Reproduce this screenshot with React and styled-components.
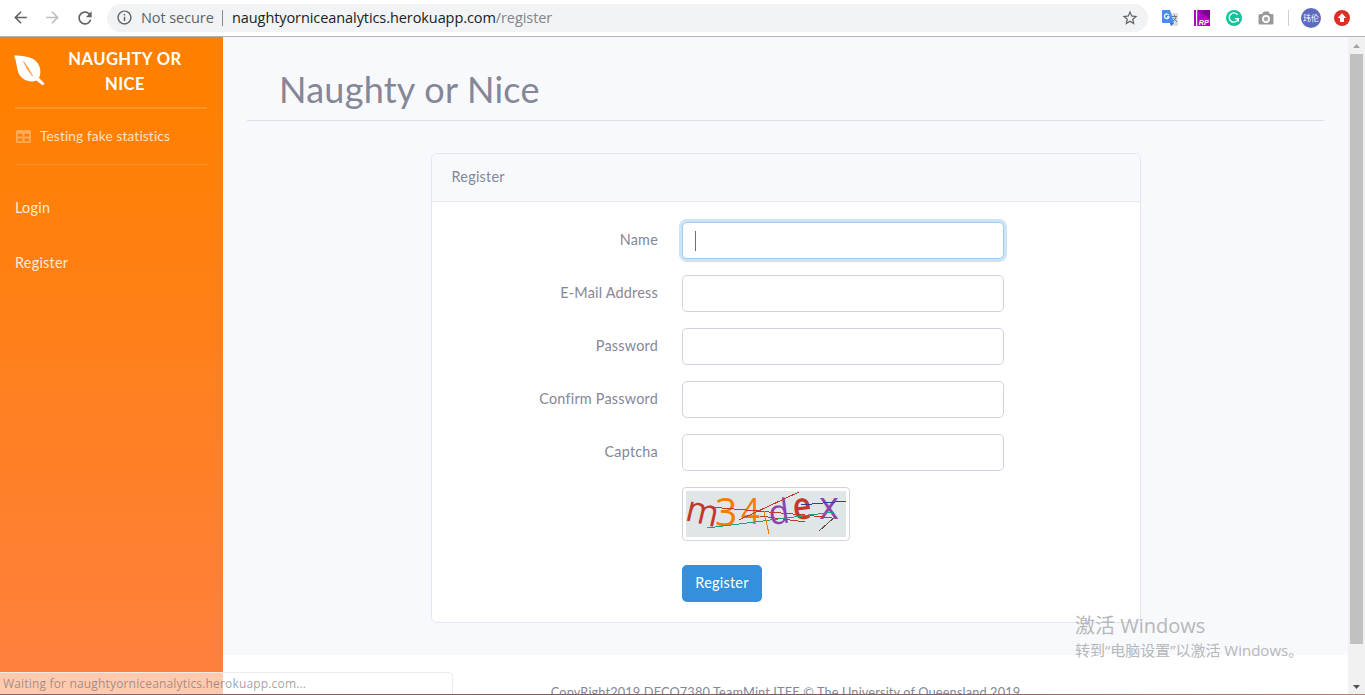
import React from 'react';
import styled, { createGlobalStyle } from 'styled-components';
import { FaTable } from 'react-icons/fa';
import { MdArrowBack, MdArrowForward, MdRefresh, MdStarBorder, MdInfoOutline } from 'react-icons/md';

const uiFont = `"Open Sans", "Noto Sans CJK SC", sans-serif`;
const pageFont = `Lato, "Noto Sans", sans-serif`;

const Global = createGlobalStyle`
  * { box-sizing: border-box; }
  html, body { margin: 0; height: 695px; overflow: hidden; background: #fff; }
  body { font-family: ${pageFont}; color: #858796; font-size: 14.4px; line-height: 23px; }
`;

const Browser = styled.div`
  position: relative;
  display: flex;
  flex-direction: column;
  width: 1365px;
  height: 695px;
  overflow: hidden;
`;

const Toolbar = styled.header`
  display: flex;
  align-items: center;
  flex: none;
  height: 37px;
  padding: 0 6px 1px 11px;
  background: #fff;
  border-bottom: 1px solid #b3b3b6;
  svg { flex: none; display: block; }
`;

const NavButtons = styled.div`
  display: flex;
  gap: 13px;
  width: 96px;
  color: #5f6368;
`;

const Faded = styled.span`
  color: #bbbdbf;
`;

const Omnibox = styled.div`
  display: flex;
  align-items: center;
  width: 1041px;
  height: 28px;
  padding: 0 9px 0 9px;
  border-radius: 14px;
  background: #f1f3f4;
  color: #5f6368;
  font: 14.5px/20px ${uiFont};
  white-space: nowrap;
`;

const Secure = styled.span`
  width: 73px;
  margin-left: 8px;
  letter-spacing: -0.08px;
`;

const Bar = styled.i`
  width: 1px;
  height: 16px;
  margin: 0 9px 0 8px;
  background: #85888c;
`;

const Address = styled.span`
  flex: 1;
  letter-spacing: -0.08px;
  color: #202124;
  span { color: #80868b; }
`;

const Extensions = styled.div`
  display: flex;
  align-items: center;
  flex: 1;
  padding-left: 14px;
  gap: 16px;
`;

const Divider = styled.i`
  width: 1px;
  height: 16px;
  margin: 0 -4px 0 -2px;
  background: #ccced1;
`;

const Avatar = styled.span`
  width: 20px;
  height: 20px;
  margin-right: -3px;
  border-radius: 50%;
  background: #5c6bc0;
  color: #fff;
  font: 8px/20px "Noto Sans CJK SC", sans-serif;
  text-align: center;
  white-space: nowrap;
`;

const Viewport = styled.div`
  display: flex;
  flex: 1;
  min-height: 0;
`;

const Sidebar = styled.nav`
  width: 223px;
  flex: none;
  padding: 9px 16px 0 15px;
  background: linear-gradient(#ff8000 0%, #ff8000 10%, #ff8040 100%);
  color: #ffe0c4;
`;

const Brand = styled.div`
  display: flex;
  height: 61px;
  color: #fff;
  svg { flex: none; margin: 9px 0 0 -1px; }
`;

const BrandName = styled.div`
  flex: 1;
  padding-top: 1px;
  margin-right: 3px;
  font: 700 16.6px/25px ${pageFont};
  letter-spacing: 0.4px;
  text-align: center;
`;

const Rule = styled.hr`
  height: ${(p) => p.$h || 1}px;
  margin: 0;
  border: 0;
  background: rgba(255, 255, 255, 0.16);
`;

const StatLink = styled.a`
  display: flex;
  align-items: center;
  height: 55px;
  padding: 0 0 1px 1px;
  gap: 9px;
  font-size: 13.6px;
  letter-spacing: 0.16px;
  svg { color: #ffaa59; }
`;

const NavLink = styled.a`
  display: block;
  height: 55px;
  letter-spacing: 0.25px;
  color: #ffe9d8;
`;

const NavList = styled.div`
  padding-top: 31px;
`;

const Main = styled.main`
  display: flex;
  flex-direction: column;
  flex: 1;
  min-width: 0;
`;

const Content = styled.section`
  flex: none;
  height: 618px;
  padding: 0 24px;
  background: #f8f9fc;
`;

const Title = styled.h1`
  height: 84px;
  margin: 0 0 32px;
  padding: 28px 0 0 32px;
  border-bottom: 1px solid #dddfe4;
  font: 400 36px/48px ${pageFont};
  letter-spacing: 0.25px;
`;

const Card = styled.div`
  width: 710px;
  height: 470px;
  margin-left: 184px;
  border: 1px solid #e3e6f0;
  border-radius: 6px;
  background: #fff;
`;

const CardHeader = styled.div`
  height: 48px;
  padding: 11px 19.5px;
  border-bottom: 1px solid #e3e6f0;
  border-radius: 5px 5px 0 0;
  background: #f8f9fc;
  letter-spacing: 0.25px;
`;

const Form = styled.form`
  display: flex;
  flex-direction: column;
  gap: 16px;
  padding-top: 20px;
`;

const Row = styled.label`
  display: flex;
  height: 37px;
`;

const Label = styled.span`
  width: 226px;
  margin-right: 24px;
  padding-top: 6px;
  letter-spacing: 0.22px;
  text-align: right;
`;

const Field = styled.span`
  display: flex;
  align-items: center;
  width: 322px;
  padding-left: 12px;
  border: 1px solid ${(p) => (p.$focused ? '#a1cbef' : '#d1d3e2')};
  border-radius: 5px;
  background: #fff;
  box-shadow: ${(p) => (p.$focused ? '0 0 0 3px #cde3f6' : 'none')};
`;

const Caret = styled.i`
  width: 1px;
  height: 20px;
  background: #6e707e;
`;

const Captcha = styled.div`
  width: 168px;
  height: 54px;
  margin-left: 250px;
  padding: 3px;
  border: 1px solid #d0d4dc;
  border-radius: 4px;
  svg { display: block; overflow: visible; background: #e0e6e8; }
`;

const Submit = styled.button`
  width: 80px;
  height: 37px;
  margin: 8px 0 0 250px;
  padding: 0 0 2px;
  border: 0;
  border-radius: 5px;
  background: #3490dc;
  color: #fff;
  font: 14.4px/23px ${pageFont};
  letter-spacing: 0.25px;
`;

const Footer = styled.footer`
  flex: 1;
  padding-top: 27px;
  background: #fff;
  font-size: 12.8px;
  letter-spacing: 0.12px;
  line-height: 20px;
  text-align: center;
  white-space: nowrap;
`;

const Scrollbar = styled.div`
  display: flex;
  flex-direction: column;
  align-items: center;
  width: 17px;
  padding: 6px 0 5px;
  background: #f1f1f1;
`;

const Thumb = styled.div`
  width: 13px;
  height: 590px;
  margin: 6px 0 auto;
  background: #c1c1c1;
`;

const Status = styled.div`
  position: absolute;
  left: -1px;
  top: 672px;
  width: 454px;
  height: 24px;
  padding-left: 3px;
  border: 1px solid #ececec;
  border-radius: 0 4px 0 0;
  background: rgba(255, 255, 255, 0.58);
  color: rgba(95, 99, 104, 0.6);
  font: 12px/22px ${uiFont};
  letter-spacing: 0.17px;
  white-space: nowrap;
`;

const Watermark = styled.div`
  position: absolute;
  left: 1075px;
  top: 612px;
  color: #b6b7ba;
  font: 400 15px/20px "Open Sans", "Noto Sans CJK SC", sans-serif;
  white-space: nowrap;
  strong { display: block; font-weight: 400; font-size: 20px; line-height: 28px; }
`;

const Edge = styled.div`
  position: absolute;
  left: 0;
  bottom: 0;
  width: 100%;
  height: 1px;
  background: linear-gradient(90deg, #8d6266, #7c5c60 60%, #b87c78);
`;

const Leaf = () => (
  <svg width="32" height="32" viewBox="0 0 32 32">
    <path fill="#fff" d="M0 .5C8 .5 15 1.500 20 4.500C26 8.500 28 17 25 23L30.500 28.500Q30.500 30 28 30L22.500 25.500C16 28 8 25 5 19C2.500 14 3 7 0 .5Z" />
    <path d="M9.500 6.500Q13 15 18.500 21Q15 13 9.500 6.500" fill="#ff9a3c" stroke="#ff9a3c" strokeWidth=".7" />
  </svg>
);

const Translate = () => (
  <svg width="16" height="16" viewBox="0 0 16 16">
    <path fill="#dcdcdc" d="M6 3h9a1 1 0 0 1 1 1v11a1 1 0 0 1-1 1H9z" />
    <path fill="#4a8af4" d="M1 0h7l4 13H1a1 1 0 0 1-1-1V1a1 1 0 0 1 1-1z" />
    <path fill="#3367d6" d="M8 13h4l-3 3z" />
    <path d="M6.800 5.200A2.300 2.300 0 1 0 7 6.800H5" fill="none" stroke="#fff" strokeWidth="1.200" />
    <path d="M10 6.500h5M12.500 5v1.500M14 7q-1 3-3 4M11.500 8l3.500 4" fill="none" stroke="#607d8b" />
  </svg>
);

const Axure = () => (
  <svg width="16" height="16" viewBox="0 0 16 16">
    <path fill="#b100c4" d="M0 0h16v16H0z" />
    <path fill="#7a0091" d="M4 0h12v9z" />
    <path fill="#9c00b0" d="M4 0h6L6 5z" />
    <path fill="#fff" d="M2 0h1.200v16H2z" />
    <text x="4.800" y="14.800" fill="#fff" fontFamily="Liberation Sans" fontWeight="700" fontStyle="italic" fontSize="8" textLength="10" lengthAdjust="spacingAndGlyphs">RP</text>
  </svg>
);

const Grammarly = () => (
  <svg width="16" height="16" viewBox="0 0 16 16">
    <circle cx="8" cy="8" r="8" fill="#15c39a" />
    <path d="M11.600 4.800A4.600 4.600 0 1 0 12.300 8.600H8.800M12.300 8.600v3" fill="none" stroke="#fff" strokeWidth="1.400" />
  </svg>
);

const Camera = () => (
  <svg width="16" height="16" viewBox="0 0 16 16">
    <path fill="#999" d="M2 4h2.500V3H4.500L6 1.500h4.500L12 4h2a1.500 1.500 0 0 1 1.500 1.500v7.500a1.500 1.500 0 0 1-1.500 1.500H2A1.500 1.500 0 0 1 .5 13V5.500A1.500 1.500 0 0 1 2 4z" />
    <circle cx="8" cy="9" r="3.100" fill="#aaa" stroke="#fff" strokeWidth="1.700" />
  </svg>
);

const Update = () => (
  <svg width="16" height="16" viewBox="0 0 16 16">
    <circle cx="8" cy="8" r="8" fill="#d93025" />
    <path fill="#fff" d="M8 3.300L12.300 8H10v4H6V8H3.700z" />
  </svg>
);

const Glyph = styled.text`
  font-family: "Open Sans", sans-serif;
  font-size: ${(p) => p.$size}px;
  font-weight: ${(p) => p.$weight || 500};
`;

const CaptchaDrawing = () => (
  <svg width="160" height="46" viewBox="0 0 160 46">
    <Glyph $size={37} transform="translate(-2 29) rotate(13) scale(.95 1)" fill="#c0392b">m</Glyph>
    <Glyph $size={39} transform="translate(29 35)" fill="#f57c00">3</Glyph>
    <Glyph $size={37} transform="translate(55 33) scale(.9 1)" fill="#f57c00">4</Glyph>
    <Glyph $size={34} transform="translate(84 34) rotate(-7)" fill="#8e44ad">d</Glyph>
    <Glyph $size={36} $weight={600} transform="translate(108 29) rotate(-6) scale(.9 1.05)" fill="#c0392b">e</Glyph>
    <Glyph $size={38} transform="translate(133 28)" fill="#8e44ad">x</Glyph>
    <g fill="none" shapeRendering="crispEdges">
      <path stroke="#c0392b" d="M24 16L119 24L146 27M53 29L113 1M74 25L119 31" />
      <path stroke="#16a085" d="M21 37L148 21" />
      <path stroke="#303f9f" d="M115 14L160 10" />
      <path stroke="#f57c00" d="M78 20L83 43" />
      <path stroke="#6d4c41" d="M133 40L150 25" />
    </g>
  </svg>
);

const fields = ['Name', 'E-Mail Address', 'Password', 'Confirm Password', 'Captcha'];

export default function App() {
  return (
    <Browser>
      <Global />
      <Toolbar>
        <NavButtons>
          <MdArrowBack size={19} />
          <Faded><MdArrowForward size={19} /></Faded>
          <MdRefresh size={20} />
        </NavButtons>
        <Omnibox>
          <MdInfoOutline size={17} />
          <Secure>Not secure</Secure>
          <Bar />
          <Address>naughtyorniceanalytics.herokuapp.com<span>/register</span></Address>
          <MdStarBorder size={18} />
        </Omnibox>
        <Extensions>
          <Translate />
          <Axure />
          <Grammarly />
          <Camera />
          <Divider />
          <Avatar>玮伦</Avatar>
          <Update />
        </Extensions>
      </Toolbar>
      <Viewport>
        <Sidebar>
          <Brand><Leaf /><BrandName>NAUGHTY OR<br />NICE</BrandName></Brand>
          <Rule $h={2} />
          <StatLink><FaTable size={15} />Testing fake statistics</StatLink>
          <Rule />
          <NavList>
            <NavLink>Login</NavLink>
            <NavLink>Register</NavLink>
          </NavList>
        </Sidebar>
        <Main>
          <Content>
            <Title>Naughty or Nice</Title>
            <Card>
              <CardHeader>Register</CardHeader>
              <Form>
                {fields.map((name, i) => (
                  <Row key={name}>
                    <Label>{name}</Label>
                    <Field $focused={i === 0}>{i === 0 && <Caret />}</Field>
                  </Row>
                ))}
                <Captcha><CaptchaDrawing /></Captcha>
                <Submit type="button">Register</Submit>
              </Form>
            </Card>
          </Content>
          <Footer>CopyRight2019 DECO7380 TeamMint ITEE © The University of Queensland 2019</Footer>
        </Main>
        <Scrollbar>
          <svg width="7" height="5"><path d="M0 5L3.500 1L7 5z" fill="#a3a3a3" /></svg>
          <Thumb />
          <svg width="7" height="5"><path d="M0 0L3.500 4L7 0z" fill="#505050" /></svg>
        </Scrollbar>
      </Viewport>
      <Status>Waiting for naughtyorniceanalytics.herokuapp.com...</Status>
      <Watermark><strong>激活 Windows</strong>转到“电脑设置”以激活 Windows。</Watermark>
      <Edge />
    </Browser>
  );
}
